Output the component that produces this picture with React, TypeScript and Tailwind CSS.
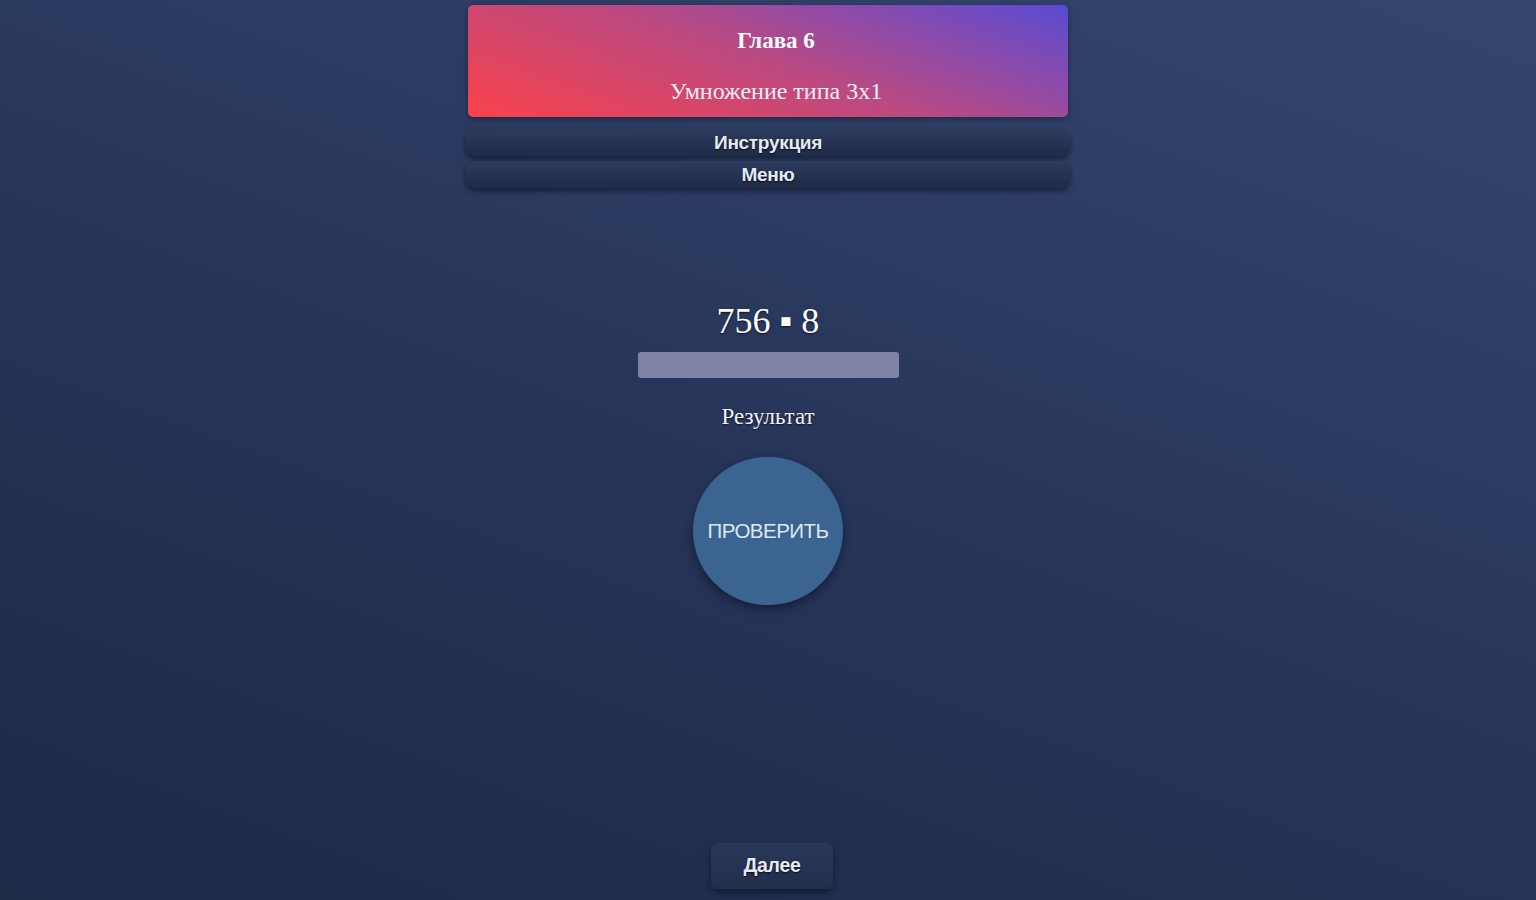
export default function App() {
  return (
    <div className="min-h-[900px] w-full bg-[linear-gradient(20deg,#1f2a47_0%,#27355a_50%,#35466e_100%)] flex flex-col items-center font-['Liberation_Serif',serif]">
      {/* Chapter card */}
      <div className="mt-[5px] w-[600px] h-[112px] rounded-[5px] bg-[linear-gradient(20deg,#f9414a_0%,#bb4a82_50%,#5a4bd3_100%)] flex flex-col items-center pl-4 text-white shadow-[0_2px_6px_rgba(0,0,0,0.35)]">
        <div className="mt-[22px] text-[23px] font-bold leading-[28px]">Глава 6</div>
        <div className="mt-[22px] text-[24px] leading-[28px] text-[#f6eef2]">Умножение типа 3x1</div>
      </div>

      {/* Nav buttons */}
      <div className="mt-[12px] w-[604px] flex flex-col gap-[5px]">
        <button className="h-[27px] rounded-[9px] bg-[linear-gradient(180deg,#2d3c5e_0%,#1f2b47_100%)] shadow-[0_3px_5px_rgba(10,15,30,0.6)] text-[#e6e9f4] font-['Liberation_Sans',sans-serif] font-bold text-[19px] leading-[27px] tracking-[-0.3px] [text-shadow:0_1px_2px_rgba(0,0,0,0.8)]">
          Инструкция
        </button>
        <button className="h-[27px] rounded-[9px] bg-[linear-gradient(180deg,#2d3c5e_0%,#1f2b47_100%)] shadow-[0_3px_5px_rgba(10,15,30,0.6)] text-[#e6e9f4] font-['Liberation_Sans',sans-serif] font-bold text-[19px] leading-[27px] tracking-[-0.3px] [text-shadow:0_1px_2px_rgba(0,0,0,0.8)]">
          Меню
        </button>
      </div>

      {/* Task */}
      <div className="mt-[111px] text-[36px] leading-[44px] text-white [text-shadow:0_1px_2px_rgba(0,0,0,0.7)]">
        756 ▪ 8
      </div>
      <div className="mt-[9px] w-[261px] h-[26px] rounded-[3px] bg-[#7f83a5]" />
      <div className="mt-[25px] text-[23px] leading-[28px] text-[#f1f2f7] [text-shadow:0_1px_2px_rgba(0,0,0,0.7)]">
        Результат
      </div>

      <button className="mt-[26px] w-[150px] h-[148px] rounded-full bg-[#3b6590] shadow-[0_4px_10px_rgba(10,15,30,0.55)] text-[#dfe6f0] font-['Liberation_Sans',sans-serif] text-[20.5px] tracking-[-0.5px]">
        ПРОВЕРИТЬ
      </button>

      <div className="flex-1" />

      <button className="mb-[11px] ml-[8px] w-[122px] h-[46px] rounded-[7px] bg-[linear-gradient(180deg,#2a3859_0%,#222e4c_100%)] shadow-[0_4px_7px_rgba(10,15,30,0.6)] text-[#e6e9f4] font-['Liberation_Sans',sans-serif] font-bold text-[19.5px] tracking-[-0.3px] [text-shadow:0_1px_2px_rgba(0,0,0,0.8)]">
        Далее
      </button>
    </div>
  );
}
